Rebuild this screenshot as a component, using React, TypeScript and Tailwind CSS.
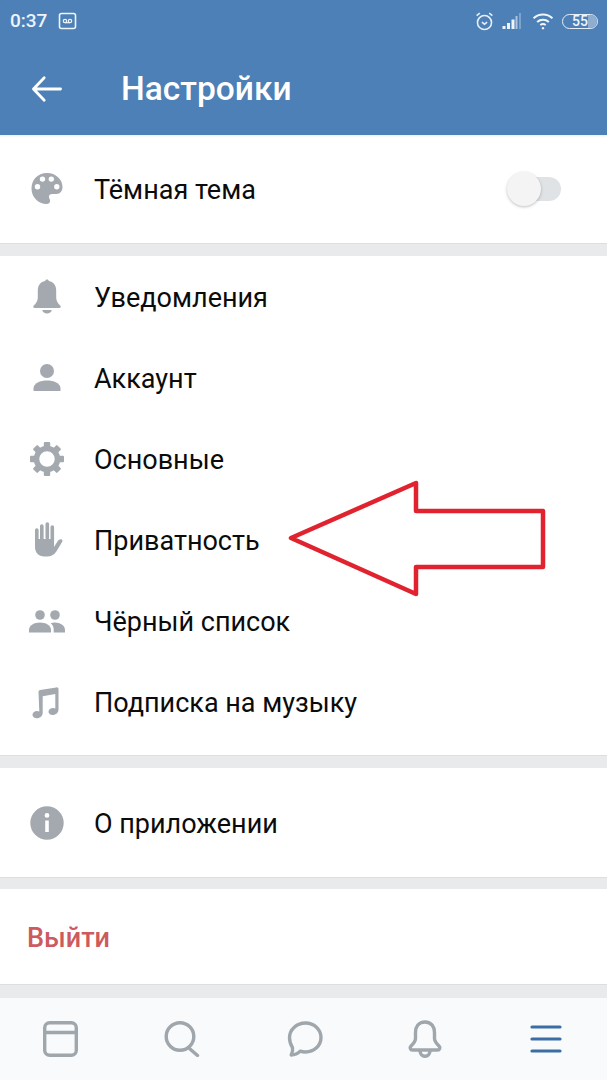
import React from 'react';

const grayIcon = 'w-[40px] h-[40px] text-[#a3a9ae]';

const Palette = () => (
  <svg viewBox="0 0 40 40" className={grayIcon} fill="currentColor">
    <path fillRule="evenodd" d="M20 4C10.600 4 4.500 11 4.500 19.500c0 8.800 7 15.500 15 15.500 2.600 0 3.600-1.600 3.600-3.200 0-1.800-1.200-2.400-1.200-4 0-1.800 1.400-2.800 3.200-2.800h4.200c3.700 0 6.200-2.800 6.200-7C35.500 10.400 28.800 4 20 4zM10.500 20.500a2.700 2.700 0 1 1 0-5.400 2.700 2.700 0 0 1 0 5.400zM15.500 12.800a2.700 2.700 0 1 1 0-5.400 2.700 2.700 0 0 1 0 5.400zM24.300 12.800a2.700 2.700 0 1 1 0-5.400 2.700 2.700 0 0 1 0 5.400zM29.800 20.500a2.700 2.700 0 1 1 0-5.400 2.700 2.700 0 0 1 0 5.400z" />
  </svg>
);

const Bell = () => (
  <svg viewBox="0 0 40 40" className={grayIcon} fill="currentColor">
    <path d="M20 2.500c-1 0-1.700.7-1.800 1.600C12.800 5 10.800 9 10.800 14v6.500c0 3.500-1.800 6-4 8-1 1-.6 2.500 1 2.500h24.400c1.600 0 2-1.500 1-2.500-2.200-2-4-4.500-4-8V14c0-5-2-9-7.400-9.900-.1-.9-.8-1.600-1.800-1.600z" />
    <path d="M15.200 33h9.600c-.5 2-2.400 3.500-4.800 3.500s-4.300-1.500-4.800-3.500z" />
  </svg>
);

const Person = () => (
  <svg viewBox="0 0 40 40" className={grayIcon} fill="currentColor">
    <circle cx="20" cy="13" r="7" />
    <path d="M6.500 33v-2.500c0-5.500 7-8 13.500-8s13.500 2.500 13.500 8V33z" />
  </svg>
);

const Gear = () => (
  <svg viewBox="0 0 40 40" className={grayIcon} fill="currentColor">
    {[0, 45, 90, 135, 180, 225, 270, 315].map(a => (
      <rect key={a} x="16.800" y="3" width="6.400" height="8" rx="1" transform={`rotate(${a} 20 20)`} />
    ))}
    <circle cx="20" cy="20" r="10.500" fill="none" stroke="currentColor" strokeWidth="5.500" />
  </svg>
);

const Hand = () => (
  <svg viewBox="0 0 40 40" className={grayIcon} fill="currentColor">
    <g stroke="currentColor" strokeWidth="3.600" strokeLinecap="round">
      <path d="M9.800 10v14M14.800 6v14M20.300 4v14M25.300 7v14" />
    </g>
    <path d="M8 19h19v8l3.500-5.500c1.200-1.800 3.300-2.800 4.500-1.800.8.700.5 1.700-.2 2.800l-5.300 8.800C27 35 24 36.500 20 36.500h-2.500C11.500 36.500 8 32.500 8 27z" />
  </svg>
);

const People = () => (
  <svg viewBox="0 0 40 40" className={grayIcon} fill="currentColor">
    <circle cx="13" cy="14" r="4.800" />
    <circle cx="28" cy="14" r="4.800" />
    <path d="M2 31.500v-2.500c0-4.800 5.500-7.500 11-7.500S24 24.200 24 29v2.500z" />
    <path d="M26.700 31.500V28.500c0-2.400-1.100-4.600-3-6.200 1.300-.5 2.700-.8 4.300-.8 5 0 10 2.800 10 7.500v2.500z" />
  </svg>
);

const Music = () => (
  <svg viewBox="0 0 40 40" className={grayIcon} fill="currentColor">
    <path d="M11.500 10c0-1 .6-1.800 1.700-2l16-2.600c1.400-.2 2.300.6 2.300 1.800v20.300c0 3-2.500 5.500-5.800 5.500-2.500 0-4.200-1.400-4.200-3.300 0-2.300 2.200-3.700 4.500-3.700.9 0 1.600.2 2.300.5V12l-12.600 2.200v16.500c0 3-2.500 5.500-5.800 5.500-2.500 0-4.400-1.400-4.400-3.300 0-2.300 2.300-3.800 4.600-3.800.8 0 1.700.2 2.200.4z" />
  </svg>
);

const Info = () => (
  <svg viewBox="0 0 40 40" className={grayIcon} fill="currentColor">
    <path fillRule="evenodd" d="M20 3.300a16.700 16.700 0 1 0 0 33.400 16.700 16.700 0 0 0 0-33.400zM20 10a2.400 2.400 0 1 1 0 4.800 2.400 2.400 0 0 1 0-4.800zM18.200 17.500h3.600v11.500h-3.600z" />
  </svg>
);

const rows = [
  { icon: <Bell />, label: 'Уведомления' },
  { icon: <Person />, label: 'Аккаунт' },
  { icon: <Gear />, label: 'Основные' },
  { icon: <Hand />, label: 'Приватность' },
  { icon: <People />, label: 'Чёрный список' },
  { icon: <Music />, label: 'Подписка на музыку' },
];

const Row = ({ icon, label }: { icon: React.ReactNode; label: string }) => (
  <div className="h-[81px] flex items-center pl-[27px]">
    <div className="w-[40px] flex justify-center">{icon}</div>
    <span className="ml-[27px] pt-[3px] text-[27px] text-[#0b0b0b]">{label}</span>
  </div>
);

const Gap = ({ h }: { h: string }) => (
  <div className={`${h} bg-[#e8eaec] border-t border-[#dcdfe2]`} />
);

const navCell = 'flex-1 flex justify-center';

export default function App() {
  return (
    <div className="relative w-[607px] h-[1080px] overflow-hidden bg-white font-['Roboto',sans-serif]">
      <header className="h-[135px] bg-[#4d80b6] text-white">
        <div className="h-[42px] flex items-center justify-between pl-[10px] pr-[9px]">
          <div className="flex items-center gap-[11px]">
            <span className="text-[19px] font-medium text-[#eef4fa]">0:37</span>
            <svg viewBox="0 0 18 18" className="w-[19px] h-[18px]" fill="none" stroke="#eef4fa">
              <rect x="1" y="1.500" width="16" height="15" rx="2" strokeWidth="1.600" />
              <circle cx="6.500" cy="9" r="1.700" strokeWidth="1.200" />
              <circle cx="11.500" cy="9" r="1.700" strokeWidth="1.200" />
              <path d="M6.500 10.700h5" strokeWidth="1.200" />
            </svg>
          </div>
          <div className="flex items-center">
            <svg viewBox="0 0 20 20" className="w-[21px] h-[21px]" fill="none" stroke="#e6eef7" strokeWidth="1.500">
              <circle cx="10" cy="11" r="6.700" />
              <path d="M7.500 10.500l2.500 2 2.500-2" />
              <path d="M2.500 4.500l3-2.500M17.500 4.500l-3-2.500" />
            </svg>
            <svg viewBox="0 0 20 18" className="ml-[7px] w-[21px] h-[18px]">
              <rect x="0" y="14" width="3" height="3" fill="#eef4fa" />
              <rect x="4.500" y="11" width="3" height="6" fill="#eef4fa" />
              <rect x="9" y="7.500" width="3" height="9.500" fill="#eef4fa" />
              <rect x="13" y="4" width="2" height="13" fill="#eef4fa" opacity=".6" />
              <rect x="16.500" y="1" width="2" height="16" fill="#eef4fa" opacity=".3" />
            </svg>
            <svg viewBox="0 0 24 20" className="ml-[9px] w-[22px] h-[18px]" fill="none" stroke="#f2f6fb" strokeWidth="2.200">
              <path d="M1.500 7C7.500 1.500 16.500 1.500 22.500 7" />
              <path d="M5.500 11c3.800-3.300 9.200-3.300 13 0" />
              <path d="M9 14.500c1.800-1.300 4.200-1.300 6 0" />
              <circle cx="12" cy="18" r="1.300" fill="#f2f6fb" stroke="none" />
            </svg>
            <div className="relative ml-[8px] w-[36px] h-[15px] rounded-[8px] border border-[#e6eef7] flex items-center justify-center">
              <div className="absolute right-0 top-0 bottom-0 w-[9px] rounded-r-[7px] bg-[#8fadce]" />
              <span className="relative text-[14px] leading-[13px] font-medium text-[#eef4fa]">55</span>
            </div>
          </div>
        </div>
        <div className="h-[93px] flex items-center pl-[31px]">
          <svg viewBox="0 0 34 30" className="w-[32px] h-[28px]" fill="none" stroke="#fff" strokeWidth="3" strokeLinecap="round" strokeLinejoin="round">
            <path d="M31.500 15H3M14 3L2.500 15 14 27" />
          </svg>
          <h1 className="ml-[58px] pt-[1px] text-[33.5px] font-medium leading-none">Настройки</h1>
        </div>
      </header>

      <section className="h-[108px] flex items-center pl-[27px] pr-[46px] shadow-[inset_0_3px_3px_-2px_rgba(0,0,0,0.08)]">
        <div className="w-[40px] flex justify-center"><Palette /></div>
        <span className="ml-[27px] pt-[2px] text-[27px] text-[#0b0b0b]">Тёмная тема</span>
        <div className="relative ml-auto w-[50px] h-[24px] rounded-full bg-[#e0e3e5]">
          <div className="absolute left-[-4px] top-[-5px] w-[34px] h-[34px] rounded-full bg-[#f4f4f4] shadow-[0_1px_3px_rgba(0,0,0,0.25)]" />
        </div>
      </section>
      <Gap h="h-[13px]" />
      <section className="pb-[13px]">
        {rows.map(r => <Row key={r.label} icon={r.icon} label={r.label} />)}
      </section>
      <Gap h="h-[13px]" />
      <section className="h-[109px] flex items-center pl-[27px]">
        <div className="w-[40px] flex justify-center"><Info /></div>
        <span className="ml-[27px] pt-[3px] text-[27px] text-[#0b0b0b]">О приложении</span>
      </section>
      <Gap h="h-[12px]" />
      <section className="h-[95px] flex items-center pl-[27px]">
        <span className="pt-[3px] text-[27px] font-medium text-[#cc5a5f]">Выйти</span>
      </section>
      <Gap h="h-[14px]" />

      <nav className="h-[82px] bg-[#f9fafb] flex items-center text-[#9fa6ac]">
        <div className={navCell}>
          <svg viewBox="0 0 35 36" className="w-[35px] h-[36px]" fill="none" stroke="currentColor" strokeWidth="3.400">
            <rect x="1.700" y="1.700" width="31.600" height="32.600" rx="5" />
            <path d="M1.700 11.500h31.600" />
          </svg>
        </div>
        <div className={navCell}>
          <svg viewBox="0 0 36 36" className="w-[36px] h-[36px]" fill="none" stroke="currentColor" strokeWidth="3.400" strokeLinecap="round">
            <circle cx="16" cy="15.500" r="13.800" />
            <path d="M26 28l7.500 6.500" />
          </svg>
        </div>
        <div className={navCell}>
          <svg viewBox="0 0 38 36" className="w-[38px] h-[36px]" fill="none" stroke="currentColor" strokeWidth="3.400" strokeLinejoin="round">
            <path d="M20.500 2c8.500 0 15.500 6.300 15.500 14.500S29 31 20.500 31c-2 0-3.700-.3-5.300-.9-2 2-5.700 3.900-9 3.900 1-2 1.800-5 1.300-7.400C5.500 23.600 4.500 20.300 4.500 16.500 4.500 8.300 12 2 20.500 2z" />
          </svg>
        </div>
        <div className={navCell}>
          <svg viewBox="0 0 36 38" className="w-[36px] h-[38px]" fill="none" stroke="currentColor" strokeWidth="3.400" strokeLinejoin="round">
            <path d="M18 2c-6.500 0-9.500 5-9.500 10.500v6c0 3-1.500 4.500-4.500 7.500-1.500 1.500-.7 4 1.500 4h25c2.200 0 3-2.500 1.500-4-3-3-4.500-4.500-4.500-7.500v-6C27.500 7 24.500 2 18 2z" />
            <path d="M13 30.500c0 3.500 2 5.800 5 5.800s5-2.300 5-5.800" />
          </svg>
        </div>
        <div className={navCell}>
          <svg viewBox="0 0 32 28" className="w-[32px] h-[28px]" fill="none" stroke="#3c6ea6" strokeWidth="3.200" strokeLinecap="round">
            <path d="M2 2h28M2 14h28M2 26h28" />
          </svg>
        </div>
      </nav>

      <svg viewBox="0 0 607 1080" className="absolute inset-0 w-[607px] h-[1080px] pointer-events-none" fill="none">
        <path d="M291 538L416 483V511H543V567H416V594Z" stroke="#e0232e" strokeWidth="4.500" strokeLinejoin="round" />
      </svg>
    </div>
  );
}
